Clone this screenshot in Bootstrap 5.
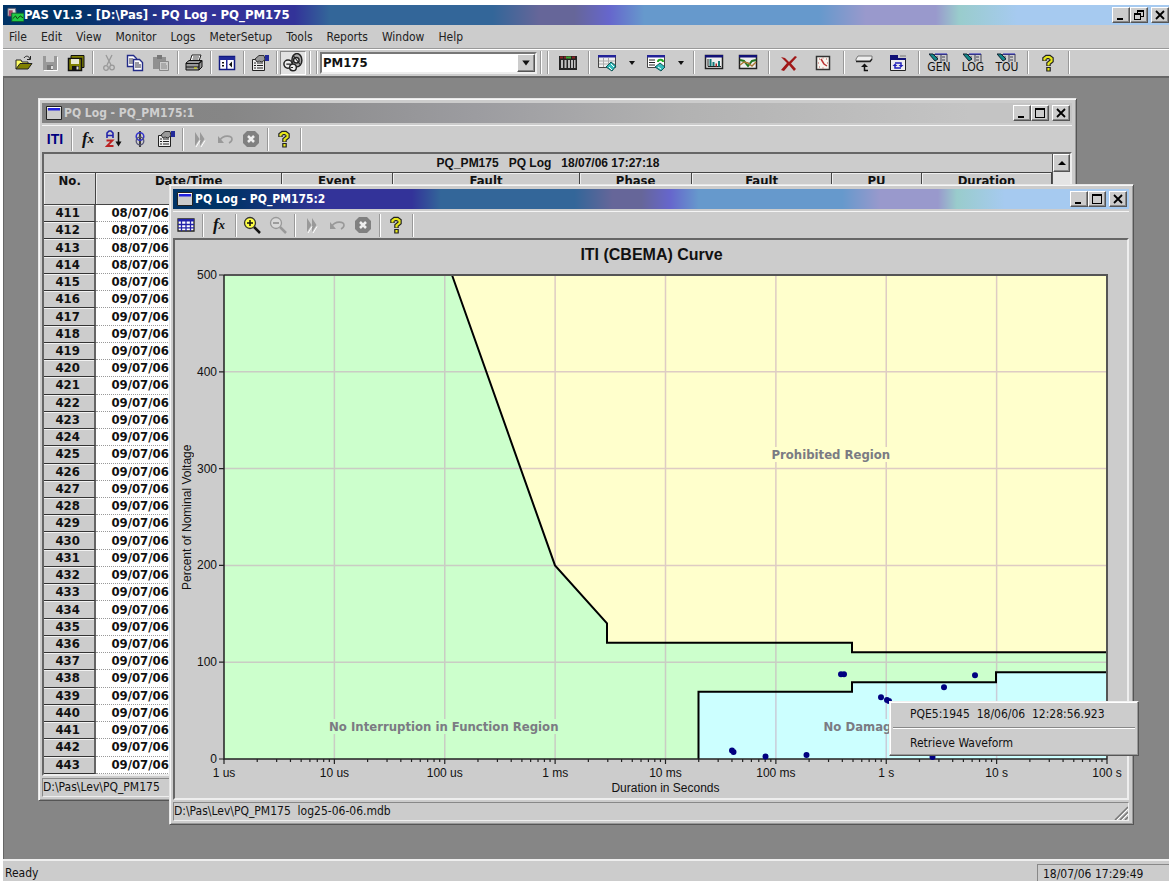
<!DOCTYPE html>
<html lang="en">
<head>
<meta charset="utf-8">
<meta name="viewport" content="width=device-width, initial-scale=1">
<title>PAS V1.3 - [D:\Pas] - PQ Log - PQ_PM175</title>
<link href="https://cdn.jsdelivr.net/npm/bootstrap@5.3.0/dist/css/bootstrap.min.css" rel="stylesheet">
<style>
  :root { --face: #cccccc; --ui: "DejaVu Sans Condensed", "DejaVu Sans", sans-serif; --plain: "Liberation Sans", sans-serif; }
  body { font-family: var(--ui); font-size: 12px; line-height: 16px; color: #111; background: #fff; padding: 5px 0 0 3px; overflow: hidden; }
  svg { display: block; flex: none; }
  button { color: inherit; }
  .caption { height: 20px; color: #fff; font-weight: 700; font-size: 12px; white-space: nowrap; gap: 2px; padding: 0 2px 0 4px;
    background: linear-gradient(90deg, #003366 0, #003366 6%, #333399 16%, #333399 25%, #336699 28%, #336699 42%, #666699 46%, #666699 49%, #6666cc 52%, #6699cc 55%, #6699cc 70%, #9999cc 74%, #9999cc 80%, #99cccc 82%, #a6caf0 87%); }
  .caption.idle { color: #cfcfcf; background: linear-gradient(90deg, #828282 0, #868686 18%, #9c9ca0 42%, #b2b2b2 62%, #c4c4c4 90%); }
  .caption.app { font-size: 13px; gap: 0; padding-right: 0; }
  .cap-btn { width: 18px; height: 16px; padding: 0; background: var(--face); border: 1px solid; border-color: #fff #555 #555 #fff; box-shadow: inset -1px -1px 0 #888; border-radius: 0; display: grid; place-items: center; color: #000; }
  .cap-btn.shut { margin-left: 3px; }
  .menu-row { height: 23px; background: var(--face); gap: 14px; padding-left: 6px; }
  .menu-row a { color: #222; text-decoration: none; }
  .tools { height: 27px; background: var(--face); border-top: 1px solid #f4f4f4; }
  .child .tools { margin-top: 2px; }
  .main-tools { height: 28px; border-top: 1px solid #999; box-shadow: inset 0 1px 0 #fff; padding-left: 8px; }
  .tool { width: 26px; height: 24px; padding: 0; border: 1px solid transparent; background: none; border-radius: 0; display: flex; align-items: center; justify-content: center; flex: none; }
  .tool.wide { width: 34px; }
  .tool.picker { width: 30px; }
  .tool.caret { width: 19px; }
  .tool.pressed { border-color: #888 #fff #fff #888; background: #e2e2e2; }
  .tool.stacked { flex-direction: column; font-size: 12px; line-height: 11px; }
  .rule { width: 7px; height: 23px; flex: none; display: flex; justify-content: center; }
  .rule::before { content: ""; width: 2px; background: #999; border-right: 1px solid #fff; }
  .iti { color: #000080; font: 700 14px/16px var(--plain); }
  .fx { font: italic 700 17px/16px "Liberation Serif", serif; }
  .fx small { font-size: 13px; }
  .combo { width: 217px; height: 22px; border: 2px solid; border-color: #777 #eee #eee #777; background: #fff; position: relative; flex: none; }
  .combo select { width: 100%; height: 18px; border: 0; padding: 0 20px 0 1px; appearance: none; background: #fff; font: 700 13px/18px var(--ui); color: #111; outline: 0; }
  .combo .drop { position: absolute; right: 0; top: 0; height: 18px; pointer-events: none; }
  .workspace { background: #868686; border: 1px solid #666; border-right: 0; border-width: 2px 0 0 1px; }
  .child { background: var(--face); border: 1px solid; border-color: #e6e6e6 #555 #555 #e6e6e6; box-shadow: inset 1px 1px 0 #f6f6f6, inset -1px -1px 0 #999; padding: 4px 4px 3px 3px; }
  .win-log { left: 34px; right: 92px; top: 20px; bottom: 58px; }
  .win-curve { left: 165px; right: 35px; top: 106px; bottom: 34px; }
  .client { border: 2px solid; border-color: #666 #eee #eee #666; min-height: 0; }
  .path-bar { height: 19px; margin-top: 2px; border: 1px solid; border-color: #888 #eee #eee #888; white-space: nowrap; overflow: hidden; }
  .log-grid { table-layout: fixed; width: 100%; height: 100%; border-collapse: separate; border-spacing: 0; font: 700 13px/14px var(--ui); }
  .log-grid th, .log-grid td { padding: 0; border: 0 solid #444; }
  .log-grid .banner { height: 19px; font: 700 12px/14px var(--plain); text-align: center; border-bottom: 1px solid #444; }
  .log-grid .heads th { height: 32px; vertical-align: top; padding-top: 1px; text-align: center; border-right: 1px solid #444; border-bottom: 1px solid #444; box-shadow: inset 1px 1px 0 #eee; }
  .log-grid tbody th { text-align: center; padding-right: 3px; border-bottom: 1px solid #333; border-right: 2px solid #666; box-shadow: inset 0 1px 0 #f2f2f2; }
  .log-grid tbody td { background: #fff; border-bottom: 1px dotted #999; padding-left: 15px; white-space: nowrap; overflow: hidden; }
  .vbar { width: 18px; flex: none; background: #e4e4e4; border-left: 1px solid #555; }
  .vbar .cap-btn { width: 100%; height: 18px; }
  .chart { display: grid; grid-template-columns: 14px 30px 1fr; grid-template-rows: 35px 1fr 20px 19px; padding: 0 20px 0 5px; font: 12px/14px var(--plain); }
  .chart h1 { font: 700 16px/18px var(--plain); grid-column: 1 / 4; text-align: center; margin: 6px 0 0 16px; }
  .y-name { writing-mode: vertical-rl; transform: rotate(180deg); text-align: center; }
  .y-marks div { height: 0; display: flex; align-items: center; justify-content: flex-end; padding-right: 7px; }
  .x-marks { grid-column: 3; padding-top: 7px; }
  .x-marks div { width: 0; display: flex; justify-content: center; white-space: nowrap; }
  .x-name { grid-column: 3; text-align: center; padding-top: 2px; }
  .zone { position: absolute; color: #7b7b83; font: 700 13px/15px var(--ui); white-space: nowrap; }
  .popup { right: 30px; bottom: 103px; width: 250px; background: var(--face); border: 1px solid; border-color: #f2f2f2 #555 #555 #f2f2f2; box-shadow: inset -1px -1px 0 #999, inset 1px 1px 0 #fff; padding: 1px 3px; white-space: nowrap; }
  .popup .dropdown-item { font-size: 12px; line-height: 16px; padding: 3px 17px; color: #111; }
  .popup hr { margin: 2px 0 3px; border-top: 1px solid #888; border-bottom: 1px solid #fff; opacity: 1; }
  .foot { height: 22px; background: var(--face); border-top: 2px solid #eee; padding-left: 2px; }
  .clock { width: 132px; padding: 1px 0 0 5px; margin-top: 3px; border-left: 1px solid #888; border-top: 1px solid #888; }
</style>
</head>
<body class="vh-100 d-flex flex-column">

<svg width="0" height="0" class="position-absolute" aria-hidden="true">
  <symbol id="i-open" viewBox="0 0 18 18"><path d="M1 15V6h5l1 2h6v3" fill="#ffff66" stroke="#222"/><path d="M1 15 5 9.500h12L13 15z" fill="#808000" stroke="#222"/><path d="M9 4c2-3 5-2 6 1M15.500 2v3.500H12" fill="none" stroke="#222"/></symbol>
  <symbol id="i-save-off" viewBox="0 0 18 18"><path d="M2 2h14v14H2z" fill="#999"/><path d="M5 2h8v6H5z" fill="#ccc"/><path d="M6 11h6v5H6z" fill="#777"/><path d="M10 12h2v3h-2z" fill="#ddd"/><path d="M16.500 3v13.500H3" fill="none" stroke="#fff"/></symbol>
  <symbol id="i-saveall" viewBox="0 0 18 18"><path d="M4 1.500h13v12H4z" fill="#808000" stroke="#111"/><path d="M1.500 4.500h13v12h-13z" fill="#808000" stroke="#111" stroke-width="1.500"/><path d="M4 5h8v5H4z" fill="#e8e8d0"/><path d="M5 12h7v4H5z" fill="#111"/><path d="M9.500 12.500h2v3h-2z" fill="#ddd"/></symbol>
  <symbol id="i-cut" viewBox="0 0 18 18"><g fill="none" stroke="#999" stroke-width="1.300"><path d="M6 1l5 10M12 1L7 11"/><circle cx="6" cy="14" r="2.300"/><circle cx="12" cy="13.500" r="2.300"/></g></symbol>
  <symbol id="i-copy" viewBox="0 0 18 18"><g fill="#fff" stroke="#222b88" stroke-width="1.400"><path d="M1.500 1.500h6l3 3v8h-9z"/><path d="M7.500 5.500h6l3 3v8h-9z"/></g><path d="M3 5h4M3 7h4M3 9h4M9 9h4M9 11h6M9 13h6" stroke="#334"/></symbol>
  <symbol id="i-paste" viewBox="0 0 18 18"><path d="M1 3h13v12H1z" fill="#909090"/><path d="M5 1h5v4H5z" fill="#777"/><path d="M7.500 7.500h9v9h-9z" fill="#ccc" stroke="#888"/><path d="M9 10h5M9 12h6M9 14h6" stroke="#888"/></symbol>
  <symbol id="i-print" viewBox="0 0 18 18"><path d="M5 7 7 1h9l-2 6z" fill="#fff" stroke="#222"/><path d="M8 3h6M7.500 5h6" stroke="#444"/><path d="M1 9l3-2.500h13V13l-3 3H1z" fill="#999" stroke="#111"/><path d="M1 9.500h13V16M14 9.500l3-3M1 13h13" fill="none" stroke="#111" stroke-width="1.200"/><path d="M9 14h3" stroke="#ee0"/></symbol>
  <symbol id="i-panel" viewBox="0 0 18 18"><path d="M1.500 2.500h15v13h-15z" fill="#fff" stroke="#111a80" stroke-width="1.500"/><path d="M1 3h16v3H1zM8 5h1.500v10H8z" fill="#222a99"/><path d="M4 8h2v1.500H4zM4 11h2v1.500H4z" fill="#111"/><path d="M14 7.500v6L11 10.500z" fill="#111"/></symbol>
  <symbol id="i-props" viewBox="0 0 18 18"><path d="M1.500 5.500h12v11h-12z" fill="#eee" stroke="#222"/><path d="M3 9h2M6 9h6M3 11.500h2M6 11.500h6M3 14h2M6 14h6" stroke="#222"/><path d="M4 5 8 1.500h5l1 4-3 2.500-3-1-2 1z" fill="#999" stroke="#333"/><path d="M14 1h4v6h-4z" fill="#222a99"/></symbol>
  <symbol id="i-meters" viewBox="0 0 18 18"><g fill="#eee" stroke="#222" stroke-width="1.300"><ellipse cx="12.500" cy="6.500" rx="4.500" ry="6" fill="#aaa"/><circle cx="12" cy="6.500" r="2.500"/><circle cx="4.500" cy="10" r="3.700"/><circle cx="9" cy="13" r="3"/></g><path d="M9 2l7 9M3 10h4M7 13h2" stroke="#222"/></symbol>
  <symbol id="i-rack" viewBox="0 0 20 18"><path d="M1 2h18v14H1z" fill="#222"/><path d="M2 3.500h16" stroke="#822" stroke-width="2" stroke-dasharray="3 1"/><path d="M8 3.500h5" stroke="#3a3" stroke-width="2"/><path d="M3 6h2v8H3zM6.500 6h2v8h-2zM10 6h2v8h-2zM13 6h2v8h-2zM16 6h1.500v8H16z" fill="#bbb"/></symbol>
  <symbol id="i-gridset" viewBox="0 0 20 18"><path d="M1.500 1.500h17v12h-17z" fill="#eee" stroke="#444"/><path d="M1 1h18v2.500H1z" fill="#229"/><path d="M6.500 4v9M11.500 4v9M2 7h16M2 10h16" stroke="#aaa"/><path d="M9 13l5-5 5 4-4 5z" fill="#3bb" stroke="#155"/><path d="M12 13l3 3M14 10l3 3" stroke="#fff"/></symbol>
  <symbol id="i-listset" viewBox="0 0 20 18"><path d="M1.500 1.500h17v12h-17z" fill="#fff" stroke="#444"/><path d="M1 1h18v2.500H1z" fill="#229"/><path d="M3 6h6M3 8.500h6M3 11h6" stroke="#222"/><path d="M12 8c0-3 5-3 5 0" fill="none" stroke="#2a2" stroke-width="2"/><path d="M9 13l5-4 5 4-4 4z" fill="#3bb" stroke="#155"/><path d="M12 13l3 2" stroke="#fff"/></symbol>
  <symbol id="i-caret" viewBox="0 0 8 8"><path d="M1 2h6L4 6z" fill="#111"/></symbol>
  <symbol id="i-bars" viewBox="0 0 20 18"><path d="M1.500 1.500h17v13h-17z" fill="#eee" stroke="#222" stroke-width="1.500"/><path d="M1 1h18v2.500H1z" fill="#117"/><path d="M4 5v7.500h13" fill="none" stroke="#222"/><path d="M5.500 5h2v7h-2zM8.500 8h2v4h-2z" fill="#177"/><path d="M11.500 9.500h1.500v3h-1.500z" fill="#a22"/><path d="M14 7h2v5.500h-2z" fill="#177"/></symbol>
  <symbol id="i-wave" viewBox="0 0 20 18"><path d="M1.500 1.500h17v13h-17z" fill="#eee" stroke="#222" stroke-width="1.500"/><path d="M1 1h18v2.500H1z" fill="#117"/><path d="M2 6l4 1 4 5 4-5 4-1" fill="none" stroke="#272" stroke-width="2"/><path d="M2 11l4-3 4 1 4 3 4-4" fill="none" stroke="#a73" stroke-width="1.400"/></symbol>
  <symbol id="i-del" viewBox="0 0 18 18"><path d="M1 3l4 1 4 4 6-6 2 1-6 6.500 5 5.500-2 2-5-6-5 6-3-1 6-7z" fill="#a01818"/></symbol>
  <symbol id="i-time" viewBox="0 0 18 18"><path d="M2.500 2.500h13v13h-13z" fill="#f8f4ee" stroke="#333" stroke-width="1.500"/><path d="M7 5l3 5 3 2" fill="none" stroke="#b33" stroke-width="1.500"/><path d="M8.500 4h1M8.500 14h1M4 9h1M13 9h1M5 5h1M12 5h1M5 13h1" stroke="#b55"/></symbol>
  <symbol id="i-send" viewBox="0 0 18 18"><path d="M1 5l2-3h14v3l-2 2H1z" fill="#eee" stroke="#777"/><path d="M1 7.500h14l2-2.500" fill="none" stroke="#222" stroke-width="1.500"/><path d="M13 16.500H9.500V12" fill="none" stroke="#111" stroke-width="1.500"/><path d="M6 13L9.500 9.500 13 13z" fill="#111"/></symbol>
  <symbol id="i-sync" viewBox="0 0 18 18"><path d="M1.500 4.500h15v12h-15z" fill="#eee" stroke="#222"/><path d="M1 1h8v3H1zM1 4h16v2H1z" fill="#117"/><path d="M11 2h6" stroke="#777"/><path d="M6 9h6v2M12 14H6v-2" fill="none" stroke="#22b" stroke-width="1.500"/><path d="M3.500 12h5L6 9.500zM9.500 11h5L12 13.500z" fill="#22b"/></symbol>
  <symbol id="i-probe" viewBox="0 0 20 9"><path d="M4 1.500h14M12 1v8M18 1v8M13 4h3M13 7h3M5 4h4" fill="none" stroke="#445"/><path d="M6 1h12" stroke="#22b"/><path d="M0 1h4l5 5-3 2z" fill="#188" stroke="#123"/></symbol>
  <symbol id="i-help" viewBox="0 0 18 18"><path d="M5.500 7V4.500L7.500 3h3l2 1.500V7L9.500 9.500V12" fill="none" stroke="#222" stroke-width="4.500"/><path d="M7.200 13h4.600v4.500H7.200z" fill="#222"/><path d="M5.500 6.500V4.500L7.500 3h3l2 1.500V7L9.500 9.500V11.500M9.500 14v2.500" fill="none" stroke="#e6e61a" stroke-width="2.200"/></symbol>
  <symbol id="i-az" viewBox="0 0 18 18"><path d="M2 8V3l2-2h2l2 2v5M2 5.500h6" fill="none" stroke="#22a" stroke-width="1.600"/><path d="M1.500 10.500h6L2 16h6.500" fill="none" stroke="#b22" stroke-width="1.800"/><path d="M13.500 2v12" stroke="#111" stroke-width="1.500"/><path d="M10.500 11.500h6l-3 5z" fill="#111"/></symbol>
  <symbol id="i-phase" viewBox="0 0 18 18"><path d="M9 1v16" stroke="#111" stroke-width="1.500"/><circle cx="9" cy="6.500" r="3.800" fill="none" stroke="#33c" stroke-width="1.500"/><circle cx="9" cy="11" r="3.800" fill="none" stroke="#557" stroke-width="1.300"/></symbol>
  <symbol id="i-ff" viewBox="0 0 18 18"><path d="M5 2l4.500 7L5 16zM10 2l4.500 7-4.500 7z" fill="#999"/><path d="M6 17l4-6.500M11 17l4-6.500" stroke="#fff"/></symbol>
  <symbol id="i-undo" viewBox="0 0 18 18"><path d="M4 10c3-5 12-5 12-1 0 2-1 3-3 4" fill="none" stroke="#999" stroke-width="1.600"/><path d="M2 6v7h6z" fill="#999"/></symbol>
  <symbol id="i-stop" viewBox="0 0 18 18"><path d="M5 1h8l4 4v8l-4 4H5l-4-4V5z" fill="#808080"/><path d="M6 6l6 6M12 6l-6 6" stroke="#eee" stroke-width="2.500"/></symbol>
  <symbol id="i-table" viewBox="0 0 18 18"><path d="M1 3h16v12H1z" fill="#fff" stroke="#222" stroke-width="1.300"/><path d="M1 3h16v2.500H1z" fill="#22a"/><path d="M4.500 4v11M9 4v11M13.500 4v11M1 8.500h16M1 11.800h16" stroke="#22a" stroke-width="1.300"/></symbol>
  <symbol id="i-zin" viewBox="0 0 18 18"><path d="M11 11l6 6" stroke="#111" stroke-width="2.500"/><circle cx="7" cy="7" r="5.500" fill="#ffff44" stroke="#333" stroke-width="1.300"/><path d="M7 4v6M4 7h6" stroke="#111" stroke-width="1.500"/></symbol>
  <symbol id="i-zout" viewBox="0 0 18 18"><path d="M11 11l6 6" stroke="#999" stroke-width="2.500"/><circle cx="7" cy="7" r="5.500" fill="#d8d8d8" stroke="#999" stroke-width="1.300"/><path d="M4 7h6" stroke="#888" stroke-width="1.500"/></symbol>
  <symbol id="i-win" viewBox="0 0 16 14"><path d="M.5.500h15v13H.5z" fill="#ccc" stroke="#222"/><path d="M1 1h14v1H1z" fill="#fff"/><path d="M2 2h12v2.500H2z" fill="#22d"/></symbol>
  <symbol id="i-app" viewBox="0 0 18 16"><path d="M1 1h8l1 8H1z" fill="#ddd" stroke="#667"/><path d="M2 3h4v6H2z" fill="#a46"/><path d="M5 6h13v9H5z" fill="#2c4" stroke="#153"/><path d="M6 12l3-3 2 3 3-3 3 2" fill="none" stroke="#131"/></symbol>
  <symbol id="w-min" viewBox="0 0 12 12"><path d="M2 9h6v2H2z"/></symbol>
  <symbol id="w-max" viewBox="0 0 12 12"><path d="M1 1h10v10H1zM2 3v7h8V3z" fill-rule="evenodd"/></symbol>
  <symbol id="w-res" viewBox="0 0 12 12"><path d="M4 1h7v7H8V7h2V3H5v1H4zM1 4h7v7H1zM2 6v4h5V6z" fill-rule="evenodd"/></symbol>
  <symbol id="w-x" viewBox="0 0 12 12"><path d="M2 2l8 8M10 2l-8 8" stroke="#000" stroke-width="1.800"/></symbol>
</svg>

<header class="flex-shrink-0">
  <div class="caption app d-flex align-items-center">
    <svg width="17" height="16"><use href="#i-app"/></svg>
    <span class="flex-grow-1">PAS V1.3 - [D:\Pas] - PQ Log - PQ_PM175</span>
    <button class="cap-btn" aria-label="Minimize"><svg width="12" height="12"><use href="#w-min"/></svg></button>
    <button class="cap-btn" aria-label="Restore"><svg width="12" height="12"><use href="#w-res"/></svg></button>
    <button class="cap-btn shut" aria-label="Close"><svg width="12" height="12"><use href="#w-x"/></svg></button>
  </div>
  <nav class="menu-row d-flex align-items-center">
    <a href="#">File</a><a href="#">Edit</a><a href="#">View</a><a href="#">Monitor</a><a href="#">Logs</a><a href="#">MeterSetup</a><a href="#">Tools</a><a href="#">Reports</a><a href="#">Window</a><a href="#">Help</a>
  </nav>
  <div class="tools main-tools d-flex align-items-center" role="toolbar">
    <button class="tool" aria-label="Open"><svg width="18" height="18"><use href="#i-open"/></svg></button>
    <button class="tool" aria-label="Save"><svg width="18" height="18"><use href="#i-save-off"/></svg></button>
    <button class="tool" aria-label="Save all"><svg width="18" height="18"><use href="#i-saveall"/></svg></button>
    <span class="rule"></span>
    <button class="tool" aria-label="Cut"><svg width="18" height="18"><use href="#i-cut"/></svg></button>
    <button class="tool" aria-label="Copy"><svg width="18" height="18"><use href="#i-copy"/></svg></button>
    <button class="tool" aria-label="Paste"><svg width="18" height="18"><use href="#i-paste"/></svg></button>
    <span class="rule"></span>
    <button class="tool" aria-label="Print"><svg width="18" height="18"><use href="#i-print"/></svg></button>
    <span class="rule"></span>
    <button class="tool" aria-label="Panel"><svg width="18" height="18"><use href="#i-panel"/></svg></button>
    <span class="rule"></span>
    <button class="tool" aria-label="Properties"><svg width="18" height="18"><use href="#i-props"/></svg></button>
    <span class="rule"></span>
    <button class="tool pressed" aria-label="Meters"><svg width="20" height="20"><use href="#i-meters"/></svg></button>
    <span class="rule"></span><span class="rule"></span>
    <div class="combo">
      <select aria-label="Meter"><option>PM175</option></select>
      <span class="cap-btn drop"><svg width="10" height="10"><use href="#i-caret"/></svg></span>
    </div>
    <span class="rule"></span><span class="rule"></span>
    <button class="tool wide" aria-label="Memory"><svg width="20" height="18"><use href="#i-rack"/></svg></button>
    <span class="rule"></span>
    <button class="tool picker" aria-label="Data monitor"><svg width="20" height="18"><use href="#i-gridset"/></svg></button>
    <button class="tool caret" aria-label="Data monitor list"><svg width="8" height="8"><use href="#i-caret"/></svg></button>
    <button class="tool picker" aria-label="Set monitor"><svg width="20" height="18"><use href="#i-listset"/></svg></button>
    <button class="tool caret" aria-label="Set monitor list"><svg width="8" height="8"><use href="#i-caret"/></svg></button>
    <span class="rule"></span>
    <button class="tool wide" aria-label="Spectrum"><svg width="20" height="18"><use href="#i-bars"/></svg></button>
    <button class="tool wide" aria-label="Waveform"><svg width="20" height="18"><use href="#i-wave"/></svg></button>
    <span class="rule"></span>
    <button class="tool wide" aria-label="Delete"><svg width="18" height="18"><use href="#i-del"/></svg></button>
    <button class="tool wide" aria-label="Clock"><svg width="18" height="18"><use href="#i-time"/></svg></button>
    <span class="rule"></span>
    <button class="tool wide" aria-label="Send"><svg width="18" height="18"><use href="#i-send"/></svg></button>
    <button class="tool wide" aria-label="Refresh"><svg width="18" height="18"><use href="#i-sync"/></svg></button>
    <span class="rule"></span>
    <button class="tool wide stacked"><svg width="20" height="9"><use href="#i-probe"/></svg><span>GEN</span></button>
    <button class="tool wide stacked"><svg width="20" height="9"><use href="#i-probe"/></svg><span>LOG</span></button>
    <button class="tool wide stacked"><svg width="20" height="9"><use href="#i-probe"/></svg><span>TOU</span></button>
    <span class="rule"></span>
    <button class="tool wide" aria-label="Help"><svg width="18" height="18"><use href="#i-help"/></svg></button>
    <span class="rule"></span>
  </div>
</header>

<main class="workspace flex-grow-1 position-relative overflow-hidden">

  <section class="child win-log position-absolute d-flex flex-column">
    <div class="caption idle d-flex align-items-center">
      <svg width="16" height="14"><use href="#i-win"/></svg>
      <span class="flex-grow-1">PQ Log - PQ_PM175:1</span>
      <div class="d-flex">
        <button class="cap-btn" aria-label="Minimize"><svg width="12" height="12"><use href="#w-min"/></svg></button>
        <button class="cap-btn" aria-label="Maximize"><svg width="12" height="12"><use href="#w-max"/></svg></button>
        <button class="cap-btn shut" aria-label="Close"><svg width="12" height="12"><use href="#w-x"/></svg></button>
      </div>
    </div>
    <div class="tools d-flex align-items-center" role="toolbar">
      <button class="tool iti">ITI</button>
      <span class="rule"></span>
      <button class="tool fx">f<small>x</small></button>
      <button class="tool" aria-label="Sort"><svg width="18" height="18"><use href="#i-az"/></svg></button>
      <button class="tool" aria-label="Phase"><svg width="18" height="18"><use href="#i-phase"/></svg></button>
      <button class="tool" aria-label="Properties"><svg width="18" height="18"><use href="#i-props"/></svg></button>
      <span class="rule"></span>
      <button class="tool" aria-label="Forward"><svg width="18" height="18"><use href="#i-ff"/></svg></button>
      <button class="tool" aria-label="Undo"><svg width="18" height="18"><use href="#i-undo"/></svg></button>
      <button class="tool" aria-label="Stop"><svg width="18" height="18"><use href="#i-stop"/></svg></button>
      <span class="rule"></span>
      <button class="tool" aria-label="Help"><svg width="18" height="18"><use href="#i-help"/></svg></button>
      <span class="rule"></span>
    </div>
    <div class="client flex-grow-1 d-flex">
      <div class="flex-grow-1">
        <table class="log-grid">
          <colgroup><col style="width:5.200%"><col style="width:18.400%"><col style="width:11%"><col style="width:18.600%"><col style="width:11.100%"><col style="width:13.900%"><col style="width:8.900%"><col style="width:12.900%"></colgroup>
          <thead>
            <tr><th class="banner" colspan="8">PQ_PM175 &nbsp; PQ Log &nbsp; 18/07/06 17:27:18</th></tr>
            <tr class="heads"><th>No.</th><th>Date/Time</th><th>Event</th><th>Fault</th><th>Phase</th><th>Fault</th><th>PU</th><th>Duration</th></tr>
          </thead>
          <tbody id="log-rows"></tbody>
        </table>
      </div>
      <div class="vbar"><button class="cap-btn" aria-label="Scroll up"><svg width="10" height="10" viewBox="0 0 10 10"><path d="M1 7h8L5 3z"/></svg></button></div>
    </div>
    <div class="path-bar">D:\Pas\Lev\PQ_PM175</div>
  </section>

  <section class="child win-curve position-absolute d-flex flex-column">
    <div class="caption d-flex align-items-center">
      <svg width="16" height="14"><use href="#i-win"/></svg>
      <span class="flex-grow-1">PQ Log - PQ_PM175:2</span>
      <div class="d-flex">
        <button class="cap-btn" aria-label="Minimize"><svg width="12" height="12"><use href="#w-min"/></svg></button>
        <button class="cap-btn" aria-label="Maximize"><svg width="12" height="12"><use href="#w-max"/></svg></button>
        <button class="cap-btn shut" aria-label="Close"><svg width="12" height="12"><use href="#w-x"/></svg></button>
      </div>
    </div>
    <div class="tools d-flex align-items-center" role="toolbar">
      <button class="tool" aria-label="Table"><svg width="18" height="18"><use href="#i-table"/></svg></button>
      <span class="rule"></span>
      <button class="tool fx">f<small>x</small></button>
      <span class="rule"></span>
      <button class="tool" aria-label="Zoom in"><svg width="18" height="18"><use href="#i-zin"/></svg></button>
      <button class="tool" aria-label="Zoom out"><svg width="18" height="18"><use href="#i-zout"/></svg></button>
      <span class="rule"></span>
      <button class="tool" aria-label="Forward"><svg width="18" height="18"><use href="#i-ff"/></svg></button>
      <button class="tool" aria-label="Undo"><svg width="18" height="18"><use href="#i-undo"/></svg></button>
      <button class="tool" aria-label="Stop"><svg width="18" height="18"><use href="#i-stop"/></svg></button>
      <span class="rule"></span>
      <button class="tool" aria-label="Help"><svg width="18" height="18"><use href="#i-help"/></svg></button>
      <span class="rule"></span>
    </div>
    <div class="client chart flex-grow-1">
      <h1>ITI (CBEMA) Curve</h1>
      <div class="y-name">Percent of Nominal Voltage</div>
      <div class="y-marks d-flex flex-column justify-content-between"><div>500</div><div>400</div><div>300</div><div>200</div><div>100</div><div>0</div></div>
      <div class="position-relative">
        <svg class="position-absolute w-100 h-100 overflow-visible" viewBox="0 0 883 485" preserveAspectRatio="none" fill="none">
          <path d="M0 0h883v485H0z" fill="#ccffcc"/>
          <path d="M228 0 331 291 383 349V368.500H628V378H883V0z" fill="#ffffcc"/>
          <path d="M474.500 485V417.500H628V408H772V398H883V485z" fill="#ccffff"/>
          <path id="grid-lines" stroke="#c8aabe" stroke-opacity=".6" stroke-width="1.500" vector-effect="non-scaling-stroke"/>
          <g stroke="#000" stroke-width="2">
            <path d="M228 0 331 291 383 349V368.500H628V378H883" vector-effect="non-scaling-stroke"/>
            <path d="M474.500 485V417.500H628V408H772V398H883" vector-effect="non-scaling-stroke"/>
          </g>
          <path d="M0 0H883V485" stroke="#555" stroke-width="2" vector-effect="non-scaling-stroke"/>
          <path d="M0 0V485H883" stroke="#222" stroke-width="1.500" vector-effect="non-scaling-stroke"/>
          <path id="tick-lines" stroke="#222" stroke-width="1.200" vector-effect="non-scaling-stroke"/>
        </svg>
        <span class="zone" style="left:62%;top:35.500%;background:#ffffcc">Prohibited Region</span>
        <span class="zone" style="left:11.900%;top:91.700%;background:#ccffcc">No Interruption in Function Region</span>
        <span class="zone" style="left:67.900%;top:91.700%;background:#ccffff">No Damag</span>
        <svg class="position-absolute w-100 h-100 overflow-visible" viewBox="0 0 883 485" preserveAspectRatio="none">
          <path d="M617 400h.01M620 400h.01M657 423h.01M663 426h.01M665 427h.01M720 413h.01M751 401h.01M508 476.500h.01M509.500 478h.01M541.500 482.500h.01M582.500 481h.01M708.500 483h.01" stroke="#000080" stroke-width="6" stroke-linecap="round" vector-effect="non-scaling-stroke"/>
        </svg>
      </div>
      <div class="x-marks d-flex justify-content-between"><div>1 us</div><div>10 us</div><div>100 us</div><div>1 ms</div><div>10 ms</div><div>100 ms</div><div>1 s</div><div>10 s</div><div>100 s</div></div>
      <div class="x-name">Duration in Seconds</div>
    </div>
    <div class="path-bar d-flex justify-content-between"><span>D:\Pas\Lev\PQ_PM175 &nbsp;log25-06-06.mdb</span>
      <svg class="align-self-end" width="14" height="14" viewBox="0 0 14 14"><path d="M1 14 14 1M6 14l8-8M11 14l3-3" stroke="#777" stroke-width="1.500"/><path d="M3 14 14 3M8 14l6-6" stroke="#fff"/></svg>
    </div>
  </section>

  <div class="popup position-absolute" role="menu">
    <a class="dropdown-item" href="#" role="menuitem">PQE5:1945 &nbsp;18/06/06 &nbsp;12:28:56.923</a>
    <hr>
    <a class="dropdown-item" href="#" role="menuitem">Retrieve Waveform</a>
  </div>
</main>

<footer class="foot d-flex justify-content-between flex-shrink-0">
  <span class="pt-1">Ready</span>
  <span class="clock">18/07/06 17:29:49</span>
</footer>

<script src="https://cdn.jsdelivr.net/npm/bootstrap@5.3.0/dist/js/bootstrap.bundle.min.js"></script>
<script>
  // Event rows: the date changes after record 415
  let rows = "";
  for (let n = 411; n <= 443; n++) {
    rows += `<tr><th scope="row">${n}</th><td colspan="7">${n <= 415 ? "08/07/06" : "09/07/06"}</td></tr>`;
  }
  document.getElementById("log-rows").innerHTML = rows;

  // Logarithmic time axis, eight decades; linear voltage axis, five steps
  const W = 883, H = 485, decade = W / 8;
  let grid = "", ticks = "";
  for (let d = 0; d <= 8; d++) {
    if (d && d < 8) grid += `M${d * decade} 0V${H}`;
    ticks += `M${d * decade} ${H}v5`;
    if (d < 8) for (let k = 2; k < 10; k++) ticks += `M${(d + Math.log10(k)) * decade} ${H}v3`;
  }
  for (let v = 0; v <= 5; v++) {
    if (v && v < 5) grid += `M0 ${v * H / 5}H${W}`;
    ticks += `M-5 ${v * H / 5}h5`;
  }
  document.getElementById("grid-lines").setAttribute("d", grid);
  document.getElementById("tick-lines").setAttribute("d", ticks);
</script>
</body>
</html>
